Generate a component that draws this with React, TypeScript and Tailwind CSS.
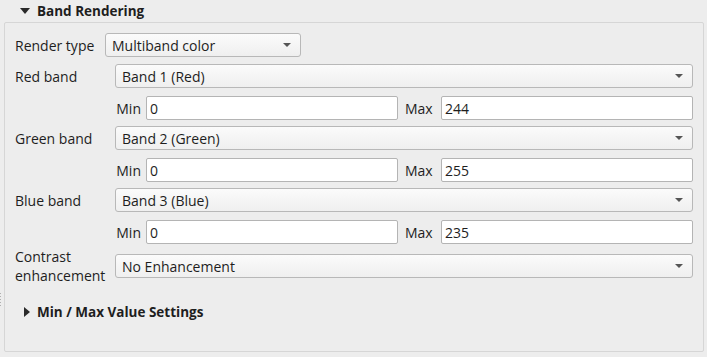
import { ReactNode } from 'react';

const FONT = { fontFamily: '"Open Sans", "Noto Sans", sans-serif' };

function Combo({ value, className = '' }: { value: string; className?: string }) {
  return (
    <div
      className={`h-[24px] flex items-center justify-between rounded-[3px] border border-[#b8b8b8] bg-gradient-to-b from-[#fbfbfb] to-[#efefef] pl-[6px] pr-[9px] ${className}`}
    >
      <span>{value}</span>
      <span className="w-0 h-0 border-l-[4px] border-r-[4px] border-t-[4px] border-l-transparent border-r-transparent border-t-[#555]" />
    </div>
  );
}

function Field({ value }: { value: string }) {
  return (
    <div className="flex-1 h-[24px] flex items-center rounded-[2px] border border-[#b4b4b4] bg-white px-[3px]">
      {value}
    </div>
  );
}

function BandRows({ label, band, min, max }: { label: string; band: string; min: string; max: string }) {
  return (
    <>
      <div className="flex items-center mt-[6px]">
        <div className="w-[100px] shrink-0">{label}</div>
        <Combo value={band} className="flex-1" />
      </div>
      <div className="flex items-center ml-[100px] mt-[8px]">
        <span className="w-[31px] text-right pr-[5px]">Min</span>
        <Field value={min} />
        <span className="w-[43px] pl-[7px]">Max</span>
        <Field value={max} />
      </div>
    </>
  );
}

function Section({ open, title, children }: { open: boolean; title: string; children?: ReactNode }) {
  return (
    <div>
      <div className="flex items-center h-[22px] pl-[20px]">
        {open ? (
          <span className="w-0 h-0 border-l-[5px] border-r-[5px] border-t-[6px] border-l-transparent border-r-transparent border-t-[#2a2a2a]" />
        ) : (
          <span className="w-0 h-0 border-t-[5px] border-b-[5px] border-l-[6px] border-t-transparent border-b-transparent border-l-[#2a2a2a]" />
        )}
        <span className="ml-[7px] font-bold text-[13.5px]">{title}</span>
      </div>
      {children}
    </div>
  );
}

export default function App() {
  return (
    <div
      className="w-[707px] h-[357px] bg-[#ededed] text-[14px] text-[#1e1e1e] relative overflow-hidden"
      style={FONT}
    >
      <Section open title="Band Rendering">
        <div className="ml-[4px] mr-[3px] h-[330px] border border-[#d6d6d6] rounded-[2px] pt-[10px] pl-[10px] pr-[10px]">
          <div className="flex items-center">
            <span className="w-[90px] shrink-0">Render type</span>
            <Combo value="Multiband color" className="w-[196px]" />
          </div>
          <div className="h-[1px]" />
          <BandRows label="Red band" band="Band 1 (Red)" min="0" max="244" />
          <BandRows label="Green band" band="Band 2 (Green)" min="0" max="255" />
          <BandRows label="Blue band" band="Band 3 (Blue)" min="0" max="235" />
          <div className="flex items-center mt-[3px]">
            <div className="w-[100px] shrink-0 leading-[19px]">
              Contrast
              <br />
              enhancement
            </div>
            <Combo value="No Enhancement" className="flex-1" />
          </div>
          <div className="mt-[16px] -ml-[11px]">
            <Section open={false} title="Min / Max Value Settings" />
          </div>
        </div>
      </Section>
      <div className="absolute left-0 top-[293px] flex flex-col gap-[2px]">
        {[0, 1, 2, 3, 4].map((i) => (
          <span key={i} className="w-[1px] h-[1px] bg-[#b0b0b0]" />
        ))}
      </div>
    </div>
  );
}
